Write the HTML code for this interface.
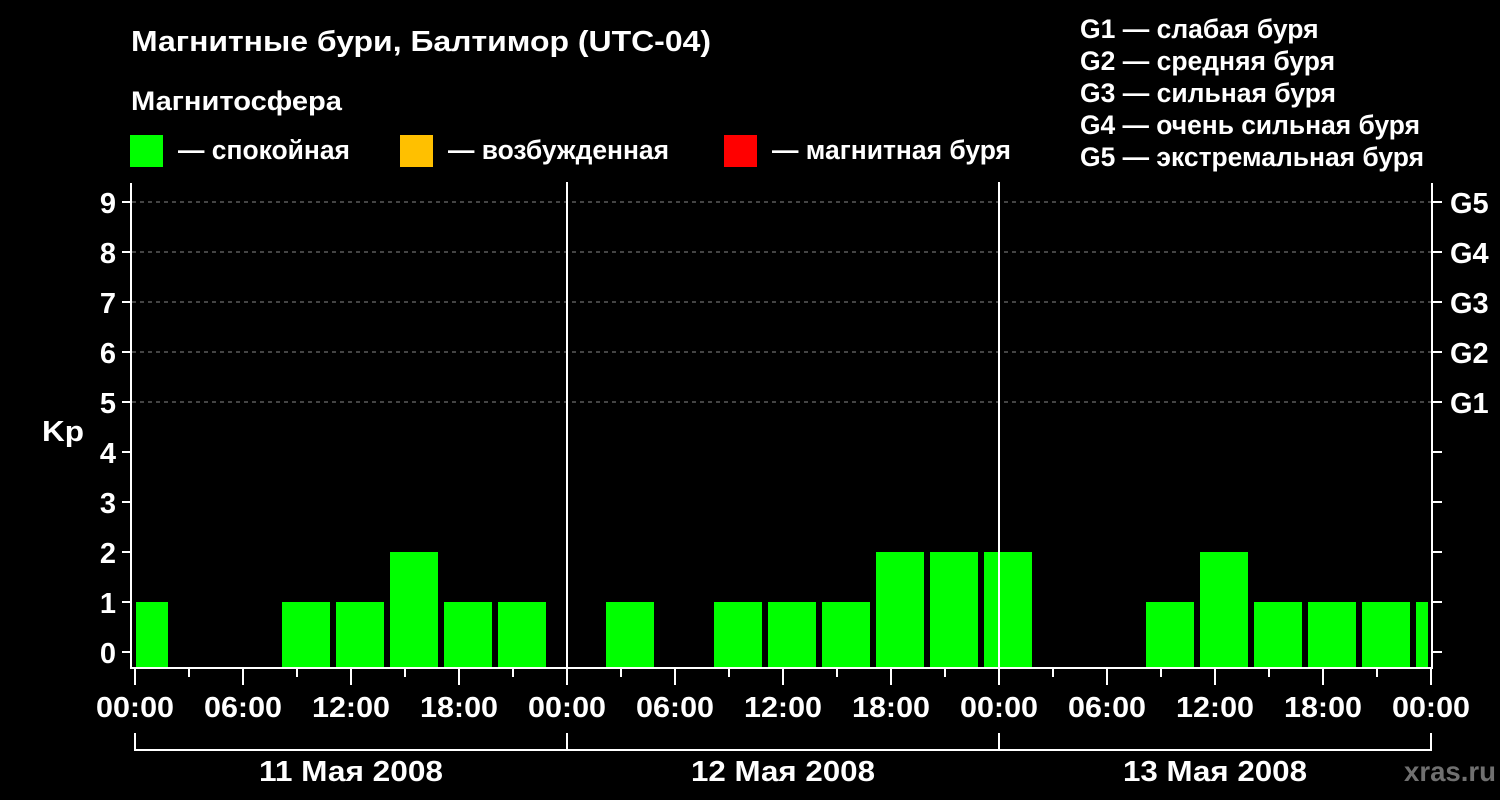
<!DOCTYPE html>
<html><head><meta charset="utf-8"><style>
html,body{margin:0;padding:0;background:#000;width:1500px;height:800px;overflow:hidden}
svg{display:block}
text{font-family:"Liberation Sans",sans-serif;font-weight:bold;fill:#fff}
</style></head><body>
<svg width="1500" height="800" xmlns="http://www.w3.org/2000/svg">
<rect width="1500" height="800" fill="#000"/>
<text x="131" y="51" font-size="29" textLength="580" lengthAdjust="spacingAndGlyphs">Магнитные бури, Балтимор (UTC-04)</text>
<text x="131" y="110" font-size="27" textLength="211" lengthAdjust="spacingAndGlyphs">Магнитосфера</text>
<rect x="130" y="135" width="33" height="32" fill="#00ff00"/>
<text x="178" y="159" font-size="26.5" textLength="172" lengthAdjust="spacingAndGlyphs">— спокойная</text>
<rect x="400" y="135" width="33" height="32" fill="#ffc000"/>
<text x="448" y="159" font-size="26.5" textLength="221" lengthAdjust="spacingAndGlyphs">— возбужденная</text>
<rect x="724" y="135" width="33" height="32" fill="#ff0000"/>
<text x="772" y="159" font-size="26.5" textLength="239" lengthAdjust="spacingAndGlyphs">— магнитная буря</text>
<g font-size="26.5">
<text x="1080" y="38">G1 — слабая буря</text>
<text x="1080" y="70">G2 — средняя буря</text>
<text x="1080" y="102">G3 — сильная буря</text>
<text x="1080" y="134" textLength="340" lengthAdjust="spacingAndGlyphs">G4 — очень сильная буря</text>
<text x="1080" y="166" textLength="344" lengthAdjust="spacingAndGlyphs">G5 — экстремальная буря</text>
</g>
<g stroke="#888" stroke-width="1" stroke-dasharray="4,4">
<line x1="132" y1="202" x2="1432" y2="202"/><line x1="132" y1="252" x2="1432" y2="252"/><line x1="132" y1="302" x2="1432" y2="302"/><line x1="132" y1="352" x2="1432" y2="352"/><line x1="132" y1="402" x2="1432" y2="402"/>
</g>
<g fill="#00ff00">
<rect x="136" y="602" width="32" height="66"/>
<rect x="282" y="602" width="48" height="66"/>
<rect x="336" y="602" width="48" height="66"/>
<rect x="390" y="552" width="48" height="116"/>
<rect x="444" y="602" width="48" height="66"/>
<rect x="498" y="602" width="48" height="66"/>
<rect x="606" y="602" width="48" height="66"/>
<rect x="714" y="602" width="48" height="66"/>
<rect x="768" y="602" width="48" height="66"/>
<rect x="822" y="602" width="48" height="66"/>
<rect x="876" y="552" width="48" height="116"/>
<rect x="930" y="552" width="48" height="116"/>
<rect x="984" y="552" width="48" height="116"/>
<rect x="1146" y="602" width="48" height="66"/>
<rect x="1200" y="552" width="48" height="116"/>
<rect x="1254" y="602" width="48" height="66"/>
<rect x="1308" y="602" width="48" height="66"/>
<rect x="1362" y="602" width="48" height="66"/>
<rect x="1416" y="602" width="12" height="66"/>
</g>
<g stroke="#fff" stroke-width="2" fill="none">
<polyline points="131,183 131,668 1432,668 1432,183"/>
<line x1="567" y1="182" x2="567" y2="668"/>
<line x1="999" y1="182" x2="999" y2="668"/>
<path d="M122,652h9M122,602h9M122,552h9M122,502h9M122,452h9M122,402h9M122,352h9M122,302h9M122,252h9M122,202h9"/>
<path d="M1432,652h10M1432,602h10M1432,552h10M1432,502h10M1432,452h10M1432,402h10M1432,352h10M1432,302h10M1432,252h10M1432,202h10"/>
<path d="M135,668v17M567,668v17M999,668v17M1431,668v17"/>
<path d="M243,668v17M351,668v17M459,668v17M675,668v17M783,668v17M891,668v17M1107,668v17M1215,668v17M1323,668v17"/>
<path d="M189,668v9M297,668v9M405,668v9M513,668v9M621,668v9M729,668v9M837,668v9M945,668v9M1053,668v9M1161,668v9M1269,668v9M1377,668v9"/>
<path d="M135,733v17h1296v-17M567,733v17M999,733v17"/>
</g>
<g font-size="29" text-anchor="end">
<text x="116" y="663">0</text><text x="116" y="613">1</text><text x="116" y="563">2</text><text x="116" y="513">3</text><text x="116" y="463">4</text><text x="116" y="413">5</text><text x="116" y="363">6</text><text x="116" y="313">7</text><text x="116" y="263">8</text><text x="116" y="213">9</text>
</g>
<text x="42" y="441" font-size="29" textLength="42" lengthAdjust="spacingAndGlyphs">Kp</text>
<g font-size="29">
<text x="1450" y="213">G5</text><text x="1450" y="263">G4</text><text x="1450" y="313">G3</text><text x="1450" y="363">G2</text><text x="1450" y="413">G1</text>
</g>
<g font-size="29" text-anchor="middle">
<text x="135" y="717" textLength="78" lengthAdjust="spacingAndGlyphs">00:00</text><text x="243" y="717" textLength="78" lengthAdjust="spacingAndGlyphs">06:00</text><text x="351" y="717" textLength="78" lengthAdjust="spacingAndGlyphs">12:00</text><text x="459" y="717" textLength="78" lengthAdjust="spacingAndGlyphs">18:00</text>
<text x="567" y="717" textLength="78" lengthAdjust="spacingAndGlyphs">00:00</text><text x="675" y="717" textLength="78" lengthAdjust="spacingAndGlyphs">06:00</text><text x="783" y="717" textLength="78" lengthAdjust="spacingAndGlyphs">12:00</text><text x="891" y="717" textLength="78" lengthAdjust="spacingAndGlyphs">18:00</text>
<text x="999" y="717" textLength="78" lengthAdjust="spacingAndGlyphs">00:00</text><text x="1107" y="717" textLength="78" lengthAdjust="spacingAndGlyphs">06:00</text><text x="1215" y="717" textLength="78" lengthAdjust="spacingAndGlyphs">12:00</text><text x="1323" y="717" textLength="78" lengthAdjust="spacingAndGlyphs">18:00</text>
<text x="1431" y="717" textLength="78" lengthAdjust="spacingAndGlyphs">00:00</text>
<text x="351" y="781" textLength="184" lengthAdjust="spacingAndGlyphs">11 Мая 2008</text><text x="783" y="781" textLength="184" lengthAdjust="spacingAndGlyphs">12 Мая 2008</text><text x="1215" y="781" textLength="184" lengthAdjust="spacingAndGlyphs">13 Мая 2008</text>
</g>
<text x="1404" y="781" font-size="28" textLength="92" lengthAdjust="spacingAndGlyphs" style="fill:#707070">xras.ru</text>
</svg>
</body></html>
